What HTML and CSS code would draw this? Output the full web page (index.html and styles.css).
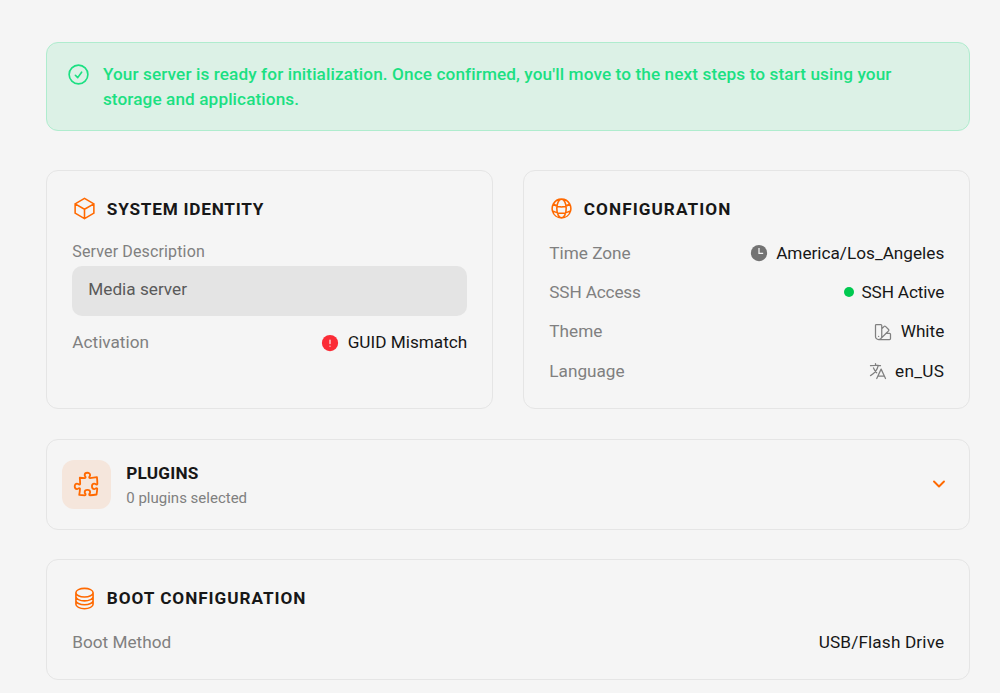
FILE: index.html
```html
<!DOCTYPE html>
<html lang="en">

<head>
    <meta charset="UTF-8">
    <meta name="viewport" content="width=device-width, initial-scale=1.0">
    <title>Server Setup</title>
    <link rel="stylesheet" href="styles.css">
</head>

<body>
    <main class="summary">
        <div class="alert">
            <svg class="alert-icon" viewBox="0 0 24 24">
                <path d="M9 12.75 11.25 15 15 9.75M21 12a9 9 0 1 1-18 0 9 9 0 0 1 18 0Z" />
            </svg>
            <p class="alert-text">Your server is ready for initialization. Once confirmed, you'll move to the next steps to start using your<br>storage and applications.</p>
        </div>

        <div class="columns">
            <section class="card">
                <h2 class="card-title">
                    <svg class="title-icon" viewBox="0 0 24 24">
                        <path d="m21 7.5-9-5.25L3 7.5m18 0-9 5.25m9-5.25v9l-9 5.25M3 7.5l9 5.25M3 7.5v9l9 5.25m0-9v9" />
                    </svg>
                    <span class="title-identity">System Identity</span>
                </h2>
                <label class="field-label">Server Description</label>
                <div class="field">Media server</div>
                <div class="row row-activation">
                    <span class="label">Activation</span>
                    <span class="value">
                        <svg class="status-icon" viewBox="0 0 24 24">
                            <circle cx="12" cy="12" r="9.75" fill="#fb2c36" />
                            <path d="M12 8.5v4.2M12 15.7v.1" stroke="#fbdcdd" stroke-width="1.6" stroke-linecap="round" />
                        </svg>
                        GUID Mismatch
                    </span>
                </div>
            </section>

            <section class="card">
                <h2 class="card-title">
                    <svg class="title-icon" viewBox="0 0 24 24">
                        <path d="M12 21a9.004 9.004 0 0 0 8.716-6.747M12 21a9.004 9.004 0 0 1-8.716-6.747M12 21c2.485 0 4.5-4.03 4.5-9S14.485 3 12 3m0 18c-2.485 0-4.5-4.03-4.5-9S9.515 3 12 3m0 0a8.997 8.997 0 0 1 7.843 4.582M12 3a8.997 8.997 0 0 0-7.843 4.582m15.686 0A11.953 11.953 0 0 1 12 10.5c-2.998 0-5.74-1.1-7.843-2.918m15.686 0A8.959 8.959 0 0 1 21 12c0 .778-.099 1.533-.284 2.253m0 0A17.919 17.919 0 0 1 12 16.5c-3.162 0-6.133-.815-8.716-2.247m0 0A9.015 9.015 0 0 1 3 12c0-1.605.42-3.113 1.157-4.418" />
                    </svg>
                    <span class="title-config">Configuration</span>
                </h2>
                <div class="rows">
                    <div class="row">
                        <span class="label">Time Zone</span>
                        <span class="value">
                            <svg class="status-icon" viewBox="0 0 24 24">
                                <circle cx="12" cy="12" r="9.75" fill="#737373" />
                                <path d="M12 6v6.5h5" fill="none" stroke="#f5f5f5" stroke-width="1.5" />
                            </svg>
                            America/Los_Angeles
                        </span>
                    </div>
                    <div class="row">
                        <span class="label label-ssh">SSH Access</span>
                        <span class="value value-ssh"><i class="dot"></i>SSH Active</span>
                    </div>
                    <div class="row">
                        <span class="label">Theme</span>
                        <span class="value">
                            <svg class="outline-icon" viewBox="0 0 24 24">
                                <path d="M4.098 19.902a3.75 3.75 0 0 0 5.304 0l6.401-6.402M6.75 21A3.75 3.75 0 0 1 3 17.25V4.125C3 3.504 3.504 3 4.125 3h5.25c.621 0 1.125.504 1.125 1.125v4.072M6.75 21a3.75 3.75 0 0 0 3.75-3.75V8.197M6.75 21h13.125c.621 0 1.125-.504 1.125-1.125v-5.25c0-.621-.504-1.125-1.125-1.125h-4.072M10.5 8.197l2.88-2.88c.438-.439 1.15-.439 1.59 0l3.712 3.713c.44.44.44 1.152 0 1.59l-2.879 2.88M6.75 17.25h.008v.008H6.75v-.008Z" />
                            </svg>
                            White
                        </span>
                    </div>
                    <div class="row">
                        <span class="label">Language</span>
                        <span class="value">
                            <svg class="outline-icon" viewBox="0 0 24 24">
                                <path d="m10.5 21 5.25-11.25L21 21m-9-3h7.5M3 5.621a48.474 48.474 0 0 1 6-.371m0 0c1.12 0 2.233.038 3.334.114M9 5.25V3m3.334 2.364C11.176 10.658 7.69 15.08 3 17.502m9.334-12.138c.896.061 1.785.147 2.666.257m-4.589 8.495a18.023 18.023 0 0 1-3.827-5.802" />
                            </svg>
                            <span class="locale">en_US</span>
                        </span>
                    </div>
                </div>
            </section>
        </div>

        <section class="plugins">
            <div class="plugins-badge">
                <svg class="plugins-icon" viewBox="0 0 24 24">
                    <path d="M14.25 6.087c0-.355.186-.676.401-.959.221-.29.349-.634.349-1.003 0-1.036-1.007-1.875-2.25-1.875s-2.25.84-2.25 1.875c0 .369.128.713.349 1.003.215.283.401.604.401.959a.64.64 0 0 1-.657.643 48.39 48.39 0 0 1-4.163-.3c.186 1.613.293 3.25.315 4.907a.656.656 0 0 1-.658.663c-.355 0-.676-.186-.959-.401a1.647 1.647 0 0 0-1.003-.349c-1.036 0-1.875 1.007-1.875 2.25s.84 2.25 1.875 2.25c.369 0 .713-.128 1.003-.349.283-.215.604-.401.959-.401.31 0 .555.26.532.57a48.039 48.039 0 0 1-.642 5.056c1.518.19 3.058.309 4.616.354a.64.64 0 0 0 .657-.643c0-.355-.186-.676-.401-.959a1.647 1.647 0 0 1-.349-1.003c0-1.035 1.008-1.875 2.25-1.875 1.243 0 2.25.84 2.25 1.875 0 .369-.128.713-.349 1.003-.215.283-.4.604-.4.959 0 .333.277.599.61.58a48.1 48.1 0 0 0 5.427-.63 48.05 48.05 0 0 0 .582-4.717.532.532 0 0 0-.533-.57c-.355 0-.676.186-.959.401-.29.221-.634.349-1.003.349-1.035 0-1.875-1.007-1.875-2.25s.84-2.25 1.875-2.25c.37 0 .713.128 1.003.349.283.215.604.401.96.401a.656.656 0 0 0 .658-.663 48.422 48.422 0 0 0-.37-5.36c-1.886.342-3.81.574-5.766.689a.578.578 0 0 1-.61-.58z" />
                </svg>
            </div>
            <div class="plugins-info">
                <h2 class="plugins-title">Plugins</h2>
                <p class="plugins-count">0 plugins selected</p>
            </div>
            <svg class="chevron" viewBox="0 0 14 14">
                <path d="M2 4.5l5 5 5-5" />
            </svg>
        </section>

        <section class="card card-boot">
            <h2 class="card-title">
                <svg class="title-icon" viewBox="0 0 24 24">
                    <path d="M20.25 6.375c0 2.278-3.694 4.125-8.25 4.125S3.75 8.653 3.75 6.375m16.5 0c0-2.278-3.694-4.125-8.25-4.125S3.75 4.097 3.75 6.375m16.5 0v11.25c0 2.278-3.694 4.125-8.25 4.125s-8.25-1.847-8.25-4.125V6.375m16.5 3.75v3.75C20.25 16.153 16.556 18 12 18s-8.25-1.847-8.25-4.125v-3.75m16.5 0c0 2.278-3.694 4.125-8.25 4.125s-8.25-1.847-8.25-4.125" />
                </svg>
                <span class="title-boot">Boot Configuration</span>
            </h2>
            <div class="row">
                <span class="label">Boot Method</span>
                <span class="value boot-method">USB/Flash Drive</span>
            </div>
        </section>
    </main>
</body>

</html>
```
FILE: styles.css
```css
* {
    box-sizing: border-box;
}

body {
    margin: 0;
    background: #f5f5f5;
    color: #171717;
    font-family: Roboto, "Noto Sans", sans-serif;
    font-size: 17.2px;
    line-height: 24.6px;
    letter-spacing: 0;
    overflow: hidden;
}

h2,
p {
    margin: 0;
}

svg {
    flex: none;
}

.summary {
    width: 924px;
    padding-top: 42.4px;
    margin-left: 46.3px;
}

.alert {
    display: flex;
    height: 88.6px;
    padding: 18.6px 19px;
    gap: 11.6px;
    border: 1px solid #afecce;
    border-radius: 12px;
    background: #dcf1e6;
    color: #1be082;
}

.alert-icon {
    width: 25px;
    height: 25px;
    fill: none;
    stroke: currentColor;
    stroke-width: 1.6;
    stroke-linecap: round;
    stroke-linejoin: round;
}

.alert-text {
    font-weight: 500;
    letter-spacing: 0.1px;
    white-space: nowrap;
}

.columns {
    display: grid;
    grid-template-columns: 1fr 1fr;
    gap: 30px;
    margin-top: 39.5px;
}

.card {
    height: 238.6px;
    padding: 25px;
    border: 1px solid #e5e5e5;
    border-radius: 12px;
}

.card-title {
    display: flex;
    align-items: center;
    gap: 9.5px;
    height: 25px;
    font-size: 17.2px;
    font-weight: 700;
    text-transform: uppercase;
}

.title-icon {
    width: 25px;
    height: 25px;
    fill: none;
    stroke: #ff6900;
    stroke-width: 1.5;
    stroke-linecap: round;
    stroke-linejoin: round;
}

.title-identity {
    letter-spacing: 0.77px;
}

.title-config {
    letter-spacing: 1.05px;
}

.title-boot {
    letter-spacing: 0.95px;
}

.field-label {
    display: block;
    margin-top: 18.8px;
    color: #808080;
    font-size: 16px;
    letter-spacing: 0.14px;
}

.field {
    height: 49.6px;
    margin-top: 1.4px;
    padding: 11px 16px;
    border-radius: 10px;
    background: #e4e4e4;
    color: #5a5a5a;
}

.rows {
    display: flex;
    flex-direction: column;
    gap: 14.8px;
}

.row {
    display: flex;
    justify-content: space-between;
}

.row-activation {
    margin-top: 14.4px;
}

.card-title + .row,
.rows {
    margin-top: 19.2px;
}

.label {
    color: #808080;
}

.label-ssh,
.value-ssh {
    letter-spacing: -0.15px;
}

.value {
    display: flex;
    align-items: center;
    gap: 7.5px;
}

.boot-method {
    letter-spacing: 0.15px;
}

.locale {
    letter-spacing: 0.3px;
}

.status-icon,
.outline-icon {
    width: 20px;
    height: 20px;
}

.outline-icon {
    fill: none;
    stroke: #808080;
    stroke-width: 1.5;
    stroke-linecap: round;
    stroke-linejoin: round;
}

.dot {
    width: 10px;
    height: 10px;
    border-radius: 50%;
    background: #00c950;
}

.plugins {
    display: flex;
    align-items: center;
    height: 90.5px;
    margin-top: 30px;
    padding: 0 23px 0 15px;
    border: 1px solid #e5e5e5;
    border-radius: 12px;
}

.plugins-badge {
    display: flex;
    align-items: center;
    justify-content: center;
    width: 49px;
    height: 49px;
    border-radius: 12px;
    background: #f5e6dc;
}

.plugins-icon {
    width: 29px;
    height: 29px;
    fill: none;
    stroke: #ff6900;
    stroke-width: 1.5;
    stroke-linejoin: round;
}

.plugins-info {
    flex: 1;
    padding-top: 3px;
    margin-left: 15px;
}

.plugins-title {
    font-size: 17.2px;
    letter-spacing: 0.2px;
    text-transform: uppercase;
}

.plugins-count {
    color: #808080;
    font-size: 15px;
}

.chevron {
    width: 14px;
    height: 14px;
    fill: none;
    stroke: #ff6900;
    stroke-width: 1.9;
    stroke-linecap: round;
    stroke-linejoin: round;
}

.card-boot {
    height: 120.4px;
    padding-top: 25.4px;
    margin-top: 29.9px;
}
```
